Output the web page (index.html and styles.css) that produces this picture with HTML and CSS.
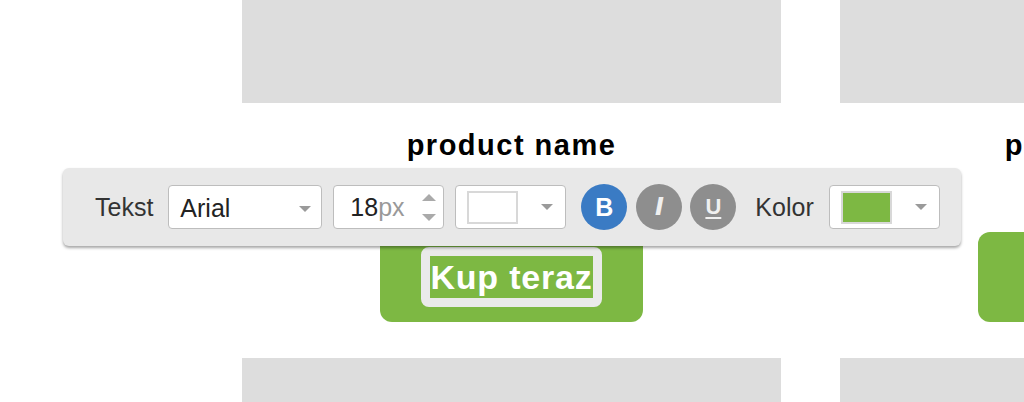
FILE: index.html
```html
<!DOCTYPE html>
<html lang="pl">
<head>
    <meta charset="UTF-8">
    <meta name="viewport" content="width=device-width, initial-scale=1.0">
    <title>Edytor produktów</title>
    <link rel="stylesheet" href="styles.css">
</head>
<body>

<div class="page">
    <div class="row">
        <div class="card">
            <div class="card-img"></div>
            <h3 class="card-title">product name</h3>
            <div class="card-btn">
                <span class="editing"><span class="btn-text">Kup teraz</span></span>
            </div>
        </div>
        <div class="card">
            <div class="card-img"></div>
            <h3 class="card-title">product name</h3>
            <div class="card-btn"><span class="btn-text">Kup teraz</span></div>
        </div>
    </div>
    <div class="row">
        <div class="card">
            <div class="card-img"></div>
        </div>
        <div class="card">
            <div class="card-img"></div>
        </div>
    </div>
</div>

<div class="toolbar">
    <span class="tb-label">Tekst</span>
    <div class="tb-select font-select">
        <span>Arial</span>
        <span class="caret"></span>
    </div>
    <div class="tb-select size-input">
        <span>18<span class="unit">px</span></span>
        <span class="spinner">
            <span class="arrow-up"></span>
            <span class="arrow-down"></span>
        </span>
    </div>
    <div class="tb-select color-select">
        <span class="swatch"></span>
        <span class="caret"></span>
    </div>
    <button type="button" class="tb-circle bold active">B</button>
    <button type="button" class="tb-circle italic">I</button>
    <button type="button" class="tb-circle underline">U</button>
    <span class="tb-label kolor">Kolor</span>
    <div class="tb-select color-select">
        <span class="swatch green"></span>
        <span class="caret"></span>
    </div>
</div>

</body>
</html>
```

FILE: styles.css
```css
body {
    font-family: "Liberation Sans", Arial, sans-serif;
    background-color: #fff;
    margin: 0;
    overflow: hidden;
}

.page {
    padding-left: 242px;
}

.row {
    display: flex;
    gap: 59px;
    margin-bottom: 36px;
}

.card {
    flex: 0 0 539px;
    display: flex;
    flex-direction: column;
}

.card-img {
    height: 103px;
    background-color: #dddddd;
}

.card-title {
    margin: 25px 0 0;
    font-size: 29px;
    line-height: 34px;
    letter-spacing: 1.5px;
    text-align: center;
    color: #000;
}

.card-btn {
    width: 263px;
    height: 90px;
    margin: 70px auto 0;
    background-color: #7db843;
    border-radius: 12px;
    display: flex;
    align-items: center;
    justify-content: center;
}

.btn-text {
    display: inline-block;
    font-size: 34px;
    line-height: 42px;
    font-weight: bold;
    letter-spacing: 0.8px;
    color: #fff;
    background-color: #7db843;
}

.editing {
    display: inline-block;
    border: 9px solid #eaeaea;
    border-radius: 8px;
}

.editing .btn-text {
    display: block;
}

/* floating text editor */
.toolbar {
    position: absolute;
    left: 63px;
    top: 168px;
    width: 898px;
    height: 78px;
    box-sizing: border-box;
    padding-left: 32px;
    display: flex;
    align-items: center;
    background-color: #e8e8e8;
    border-radius: 6px;
    box-shadow: 0 2px 3px rgba(0, 0, 0, 0.35);
}

.tb-label {
    font-size: 25px;
    color: #333;
}

.tb-select {
    height: 44px;
    box-sizing: border-box;
    margin-left: 12px;
    background-color: #fff;
    border: 1px solid #bdbdbd;
    border-radius: 4px;
    display: flex;
    align-items: center;
    justify-content: space-between;
    font-size: 25px;
    color: #222;
}

.font-select {
    width: 154px;
    padding: 3px 10px 0 11px;
    margin-left: 15px;
}

.size-input {
    width: 111px;
    padding: 0 7px 0 16px;
    margin-left: 11px;
}

.unit {
    color: #999;
}

.color-select {
    width: 111px;
    padding: 0 12px 0 11px;
    margin-left: 11px;
}

.caret {
    width: 0;
    height: 0;
    border-left: 6px solid transparent;
    border-right: 6px solid transparent;
    border-top: 6px solid #9a9a9a;
}

.spinner {
    display: flex;
    flex-direction: column;
    gap: 13px;
}

.arrow-up,
.arrow-down {
    width: 0;
    height: 0;
    border-left: 7px solid transparent;
    border-right: 7px solid transparent;
}

.arrow-up {
    border-bottom: 7px solid #aaa;
}

.arrow-down {
    border-top: 7px solid #aaa;
}

.swatch {
    width: 51px;
    height: 33px;
    box-sizing: border-box;
    border: 2px solid #d8d8d8;
    background-color: #fff;
}

.swatch.green {
    background-color: #7db843;
}

.tb-circle {
    width: 46px;
    height: 46px;
    margin-left: 9px;
    padding: 0;
    border: none;
    border-radius: 50%;
    background-color: #8e8e8e;
    color: #f0f0f0;
    font-family: "Liberation Sans", Arial, sans-serif;
    font-size: 25px;
    font-weight: bold;
    cursor: pointer;
    display: flex;
    align-items: center;
    justify-content: center;
}

.tb-circle.active {
    background-color: #3a7bc4;
    color: #fff;
    margin-left: 15px;
}

.italic {
    font-style: italic;
    font-family: "DejaVu Sans", sans-serif;
    font-size: 24px;
}

.underline {
    text-decoration: underline;
    text-decoration-thickness: 2px;
    text-underline-offset: 3px;
    font-size: 22px;
    margin-left: 8px;
}

.kolor {
    margin-left: 19px;
}

.kolor + .color-select {
    margin-left: 15px;
}
```
